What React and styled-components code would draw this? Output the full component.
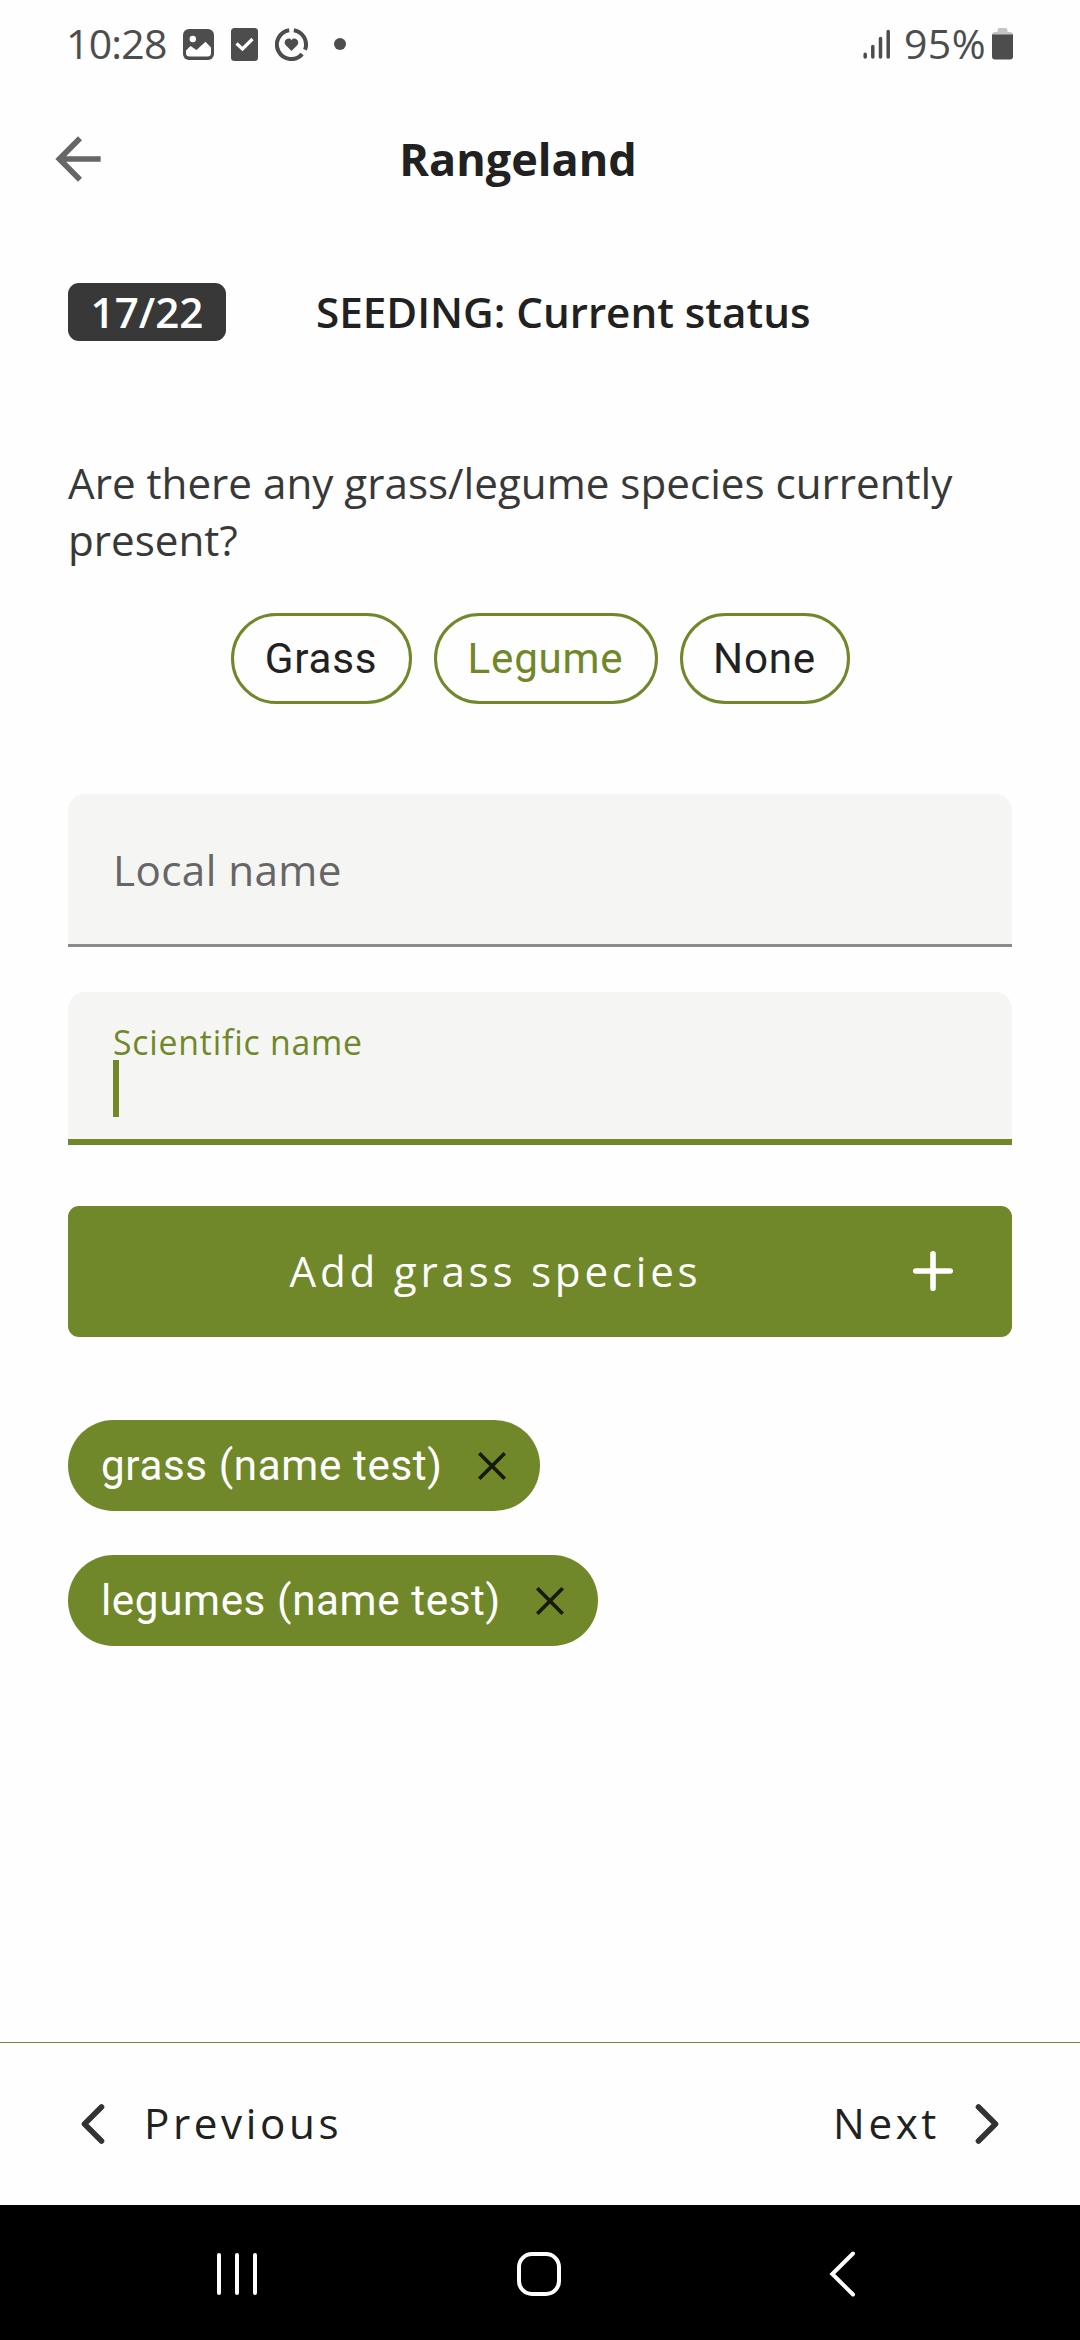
import React from 'react';
import styled, { createGlobalStyle } from 'styled-components';

const GREEN = '#708829';
const INK = '#212121';

const GlobalStyle = createGlobalStyle`
  * { box-sizing: border-box; }
  body {
    margin: 0;
    background: #fefefe;
    font-family: 'Open Sans', 'Noto Sans', sans-serif;
    font-size: 42.1875px;
    line-height: 57px;
    color: ${INK};
  }
  button { font: inherit; color: inherit; background: none; border: 0; padding: 0; margin: 0; }
  svg { display: block; flex: none; }
`;

const Screen = styled.div`
  display: flex;
  flex-direction: column;
  width: 1080px;
  height: 2340px;
  overflow: hidden;
`;

const StatusBar = styled.header`
  display: flex;
  justify-content: space-between;
  height: 88px;
  padding: 0 67px 0 66px;
  color: #4d4d4d;
  font-size: 41px;
`;

const StatusGroup = styled.div`
  display: flex;
  align-items: center;
`;

const Clock = styled.span`
  width: 117px;
  padding-bottom: 2px;
  letter-spacing: -0.8px;
`;

const StatusIcons = styled.div`
  display: flex;
  align-items: center;
  gap: 17px;
`;

const MoreDot = styled.span`
  width: 12px;
  height: 12px;
  margin-left: 9px;
  border-radius: 50%;
  background: #4d4d4d;
`;

const BatteryLevel = styled.span`
  margin: 0 6px 0 13px;
  padding-bottom: 2px;
  letter-spacing: 0.4px;
`;

const AppBar = styled.div`
  display: grid;
  grid-template-columns: 68px 1fr 68px;
  align-items: center;
  height: 142px;
  padding: 0 88px 0 44px;
`;

const Title = styled.h1`
  margin: 0 0 1px;
  text-align: center;
  font-size: 45px;
  line-height: 61px;
  font-weight: 700;
`;

const StepRow = styled.div`
  display: flex;
  align-items: flex-start;
  height: 58px;
  margin: 53px 68px 0;
`;

const StepBadge = styled.span`
  width: 158px;
  height: 58px;
  border-radius: 11px;
  background: #383838;
  color: #fff;
  font-weight: 600;
  text-align: center;
`;

const StepTitle = styled.h2`
  margin: 0 0 0 90px;
  font-size: inherit;
  font-weight: 600;
`;

const Content = styled.main`
  display: flex;
  flex-direction: column;
  flex: 1;
  padding: 113px 68px 0;
`;

const Question = styled.p`
  margin: 0;
  color: #383838;
`;

const ChoiceRow = styled.div`
  display: flex;
  justify-content: center;
  gap: 22px;
  margin: 45px 0 90px;
`;

const Choice = styled.button`
  height: 91px;
  width: ${(p) => p.$width}px;
  border: 3px solid ${GREEN};
  border-radius: 46px;
  color: ${(p) => (p.$active ? GREEN : INK)};
  font-family: Roboto, sans-serif;
  letter-spacing: 0.75px;
`;

const Field = styled.label`
  display: flex;
  flex-direction: column;
  justify-content: ${(p) => (p.$focused ? 'flex-start' : 'center')};
  height: 153px;
  margin-bottom: 45px;
  padding: ${(p) => (p.$focused ? '33px 45px 0' : '1px 45px 0')};
  border-bottom: ${(p) => (p.$focused ? `6px solid ${GREEN}` : '3px solid #8b8b8b')};
  border-radius: 17px 17px 0 0;
  background: #f5f5f3;
`;

const FieldLabel = styled.span`
  color: ${(p) => (p.$small ? GREEN : '#666')};
  font-size: ${(p) => (p.$small ? '33.75px' : '42.1875px')};
  line-height: ${(p) => (p.$small ? '35px' : '57px')};
  letter-spacing: ${(p) => (p.$small ? '0.8px' : '0.42px')};
`;

const Caret = styled.span`
  width: 6px;
  height: 57px;
  background: ${GREEN};
`;

const AddButton = styled.button`
  display: flex;
  align-items: center;
  height: 131px;
  margin: 16px 0 83px;
  padding: 0 45px 1px 24px;
  border-radius: 11px;
  background: ${GREEN};
  color: #fff;
`;

const AddLabel = styled.span`
  flex: 1;
  padding-bottom: 2px;
  text-align: center;
  letter-spacing: 3.75px;
`;

const TagList = styled.div`
  display: flex;
  flex-direction: column;
  align-items: flex-start;
  gap: 44px;
`;

const Tag = styled.div`
  display: flex;
  align-items: center;
  justify-content: space-between;
  width: ${(p) => p.$width}px;
  height: 91px;
  padding: 0 34px 0 33px;
  border-radius: 46px;
  background: ${GREEN};
  color: #fff;
  font-family: Roboto, sans-serif;
  letter-spacing: 0.62px;
`;

const Footer = styled.footer`
  display: flex;
  align-items: center;
  justify-content: space-between;
  height: 163px;
  padding: 0 60px 1px;
  border-top: 1px solid #76853f;
`;

const PagerButton = styled.button`
  display: flex;
  align-items: center;
  gap: ${(p) => p.$gap}px;
  letter-spacing: 3.6px;
`;

const PagerLabel = styled.span`
  padding-bottom: 2px;
`;

const SystemNav = styled.nav`
  display: flex;
  align-items: center;
  justify-content: space-between;
  height: 135px;
  padding: 3px 211px 0;
  background: #000;
`;

const PictureIcon = () => (
  <svg width="31" height="31" viewBox="0 0 31 31">
    <rect width="31" height="31" rx="6" fill="#4d4d4d" />
    <circle cx="9.8" cy="10" r="3.2" fill="#fff" />
    <path d="M3 21.500 L7.500 17 L13.500 21 L22.500 12.800 L28 18.500 V24 Q28 27.500 24.500 27.500 H6.500 Q3 27.500 3 24 Z" fill="#fff" />
  </svg>
);

const TaskIcon = () => (
  <svg width="27" height="33" viewBox="0 0 27 33">
    <rect width="27" height="33" rx="3.5" fill="#4d4d4d" />
    <path d="M5.500 15.500 L11.500 21 L21.500 11" fill="none" stroke="#fff" strokeWidth="3.200" />
  </svg>
);

const HealthIcon = () => (
  <svg width="33" height="33" viewBox="0 0 33 33">
    <path d="M18.800 2.200 A14.500 14.500 0 0 1 30 21.800 M27.200 26.200 A14.500 14.500 0 1 1 14.200 2.200" fill="none" stroke="#4d4d4d" strokeWidth="4" />
    <path d="M16.500 23 L10.800 17.300 C7.800 13.800 11.500 9 15.200 10.800 L16.500 11.900 L17.800 10.800 C21.500 9 25.200 13.800 22.200 17.300 Z" fill="#4d4d4d" />
  </svg>
);

const SignalIcon = () => (
  <svg width="28" height="31" viewBox="0 0 28 31" stroke="#4d4d4d" strokeWidth="3.500" strokeLinecap="round">
    <path d="M2.200 25.300 V28 M9.800 17.500 V28 M17.500 9.500 V28 M25.200 2.500 V28" />
  </svg>
);

const BatteryIcon = () => (
  <svg width="21" height="32" viewBox="0 0 21 32">
    <path d="M5.500 2 Q5.500 0 7.500 0 H13.500 Q15.500 0 15.500 2 V4 H18 Q21 4 21 7 H0 Q0 4 3 4 H5.500 Z" fill="#c4c4c4" />
    <path d="M0 6.500 H21 V28.500 Q21 31.500 18 31.500 H3 Q0 31.500 0 28.500 Z" fill="#4d4d4d" />
  </svg>
);

const BackArrow = () => (
  <svg width="68" height="68" viewBox="0 0 24 24" fill="#666">
    <path d="M20 11H7.830l5.590-5.590L12 4l-8 8 8 8 1.410-1.410L7.830 13H20v-2z" />
  </svg>
);

const PlusIcon = () => (
  <svg width="68" height="68" viewBox="0 0 68 68" stroke="#fff" strokeWidth="5.600" strokeLinecap="round">
    <path d="M34 16.800 V51.200 M16.800 34 H51.200" />
  </svg>
);

const CloseIcon = () => (
  <svg width="28" height="28" viewBox="0 0 28 28" stroke="#151a00" strokeWidth="3.700">
    <path d="M1.300 1.300 L26.700 26.700 M26.700 1.300 L1.300 26.700" />
  </svg>
);

const Chevron = ({ right }) => (
  <svg width="68" height="68" viewBox="0 0 68 68" fill="none" stroke="#333" strokeWidth="5.600" strokeLinecap="round" strokeLinejoin="round">
    <path d={right ? 'M26.500 17 L43.500 34 L26.500 51' : 'M41.500 17 L24.500 34 L41.500 51'} />
  </svg>
);

const RecentsIcon = () => (
  <svg width="52" height="46" viewBox="0 0 52 46" stroke="#fff" strokeWidth="4" strokeLinecap="round">
    <path d="M8 4 V42 M26 4 V42 M44 4 V42" />
  </svg>
);

const HomeIcon = () => (
  <svg width="46" height="46" viewBox="0 0 46 46" fill="none" stroke="#fff" strokeWidth="4">
    <rect x="2" y="3" width="40" height="40" rx="13" />
  </svg>
);

const BackIcon = () => (
  <svg width="52" height="46" viewBox="0 0 52 46" fill="none" stroke="#fff" strokeWidth="4" strokeLinecap="round">
    <path d="M36 2.500 L15.300 23 L36 43.500" />
  </svg>
);

export default function App() {
  return (
    <>
      <GlobalStyle />
      <Screen>
        <StatusBar>
          <StatusGroup>
            <Clock>10:28</Clock>
            <StatusIcons>
              <PictureIcon />
              <TaskIcon />
              <HealthIcon />
              <MoreDot />
            </StatusIcons>
          </StatusGroup>
          <StatusGroup>
            <SignalIcon />
            <BatteryLevel>95%</BatteryLevel>
            <BatteryIcon />
          </StatusGroup>
        </StatusBar>
        <AppBar>
          <BackArrow />
          <Title>Rangeland</Title>
        </AppBar>
        <StepRow>
          <StepBadge>17/22</StepBadge>
          <StepTitle>SEEDING: Current status</StepTitle>
        </StepRow>
        <Content>
          <Question>Are there any grass/legume species currently present?</Question>
          <ChoiceRow>
            <Choice $width={181}>Grass</Choice>
            <Choice $width={224} $active>Legume</Choice>
            <Choice $width={170}>None</Choice>
          </ChoiceRow>
          <Field>
            <FieldLabel>Local name</FieldLabel>
          </Field>
          <Field $focused>
            <FieldLabel $small>Scientific name</FieldLabel>
            <Caret />
          </Field>
          <AddButton>
            <AddLabel>Add grass species</AddLabel>
            <PlusIcon />
          </AddButton>
          <TagList>
            <Tag $width={472}>
              grass (name test)
              <CloseIcon />
            </Tag>
            <Tag $width={530}>
              legumes (name test)
              <CloseIcon />
            </Tag>
          </TagList>
        </Content>
        <Footer>
          <PagerButton $gap={16}>
            <Chevron />
            <PagerLabel>Previous</PagerLabel>
          </PagerButton>
          <PagerButton $gap={12}>
            <PagerLabel>Next</PagerLabel>
            <Chevron right />
          </PagerButton>
        </Footer>
        <SystemNav>
          <RecentsIcon />
          <HomeIcon />
          <BackIcon />
        </SystemNav>
      </Screen>
    </>
  );
}
